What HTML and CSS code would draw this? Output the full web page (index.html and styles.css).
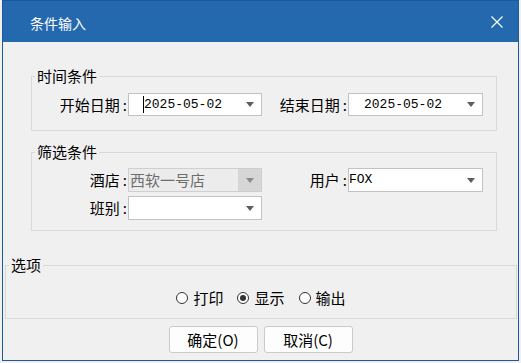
FILE: index.html
```html
<!DOCTYPE html>
<html lang="zh-CN">
  <head>
    <meta charset="UTF-8" />
    <meta name="viewport" content="width=device-width, initial-scale=1.0" />
    <title>条件输入</title>
    <link rel="stylesheet" href="styles.css">
  </head>
  <body>
    <div class="window">
      <div class="titlebar">
        <span class="title">条件输入</span>
        <svg class="close" width="12" height="12" viewBox="0 0 12 12">
          <path d="M0.5 0.5 L11.5 11.5 M11.5 0.5 L0.5 11.5" stroke="#fff" stroke-width="1.2" fill="none" />
        </svg>
      </div>

      <fieldset class="group group-time">
        <legend>时间条件</legend>
        <div class="grid">
          <label class="lbl">开始日期<span class="colon">:</span></label>
          <div class="combo">
            <span class="value date"><i class="caret"></i>2025-05-02</span>
            <span class="arrow"></span>
          </div>
          <label class="lbl">结束日期<span class="colon">:</span></label>
          <div class="combo">
            <span class="value date">2025-05-02</span>
            <span class="arrow"></span>
          </div>
        </div>
      </fieldset>

      <fieldset class="group group-filter">
        <legend>筛选条件</legend>
        <div class="grid">
          <label class="lbl">酒店<span class="colon">:</span></label>
          <div class="combo disabled">
            <span class="value">西软一号店</span>
            <span class="drop"><span class="arrow"></span></span>
          </div>
          <label class="lbl">用户<span class="colon">:</span></label>
          <div class="combo">
            <span class="value mono">FOX</span>
            <span class="arrow"></span>
          </div>
          <label class="lbl">班别<span class="colon">:</span></label>
          <div class="combo">
            <span class="value"></span>
            <span class="arrow"></span>
          </div>
        </div>
      </fieldset>

      <fieldset class="group group-opts">
        <legend>选项</legend>
        <div class="radios">
          <span class="radio"><span class="dot"></span>打印</span>
          <span class="radio checked"><span class="dot"></span>显示</span>
          <span class="radio"><span class="dot"></span>输出</span>
        </div>
      </fieldset>

      <div class="buttons">
        <button class="btn">确定(O)</button>
        <button class="btn">取消(C)</button>
      </div>
    </div>
  </body>
</html>
```

FILE: styles.css
```css
body {
  margin: 0;
  background-color: #f0f0f0;
  font-family: "Noto Sans CJK SC", "Noto Sans", sans-serif;
  font-size: 15px;
  color: #000;
}

.window {
  margin-left: 2px;
  width: 517px;
  height: 361px;
  box-sizing: border-box;
  border: 1px solid #1d5a9b;
  background-color: #f0f0f0;
}

.titlebar {
  height: 41px;
  background-color: #2469ae;
  display: flex;
  align-items: center;
  padding: 3px 15px 0 27px;
  box-sizing: border-box;
}

.title {
  color: #fff;
  font-size: 14px;
  line-height: 16px;
}

.close {
  margin-left: auto;
  margin-top: -2px;
}

.group {
  border: 1px solid #d9d9d9;
  padding: 0;
  min-width: 0;
}

.group legend {
  margin-left: 3px;
  padding: 0 2px;
  line-height: 16px;
  font-size: 15px;
}

.group-time {
  margin: 26px 21px 0 28px;
  padding: 9px 0 14px 0;
}

.group-filter {
  margin: 13px 21px 0 28px;
  padding: 8px 0 10px 0;
}

.group-opts {
  margin: 26px 1px 0 2px;
  padding: 17px 0 12px 0;
}

.grid {
  display: grid;
  grid-template-columns: 96px 134px 86px 135px;
  row-gap: 4px;
  align-items: center;
}

.lbl {
  text-align: right;
  line-height: 22px;
  white-space: nowrap;
}

.colon {
  padding: 0 1px 0 3px;
}

.combo {
  height: 24px;
  box-sizing: border-box;
  border: 1px solid #c2c2c2;
  background-color: #fff;
  display: flex;
  align-items: center;
}

.group-time .combo {
  height: 23px;
}

.value {
  flex: 1;
  white-space: nowrap;
  line-height: 20px;
}

.date {
  font-family: "Liberation Mono", monospace;
  font-size: 13px;
  padding-left: 15px;
  position: relative;
}

.mono {
  font-family: "Liberation Mono", monospace;
  font-size: 13px;
}

.caret {
  position: absolute;
  left: 14px;
  top: 1px;
  width: 1px;
  height: 17px;
  background-color: #000;
}

.arrow {
  width: 0;
  height: 0;
  border-left: 4.5px solid transparent;
  border-right: 4.5px solid transparent;
  border-top: 5px solid #5b5f5b;
  margin-right: 7px;
}

.combo.disabled {
  background-color: #ececec;
  border-color: #cfcfcf;
}

.combo.disabled .value {
  color: #6d6d6d;
  padding-left: 1px;
}

.drop {
  align-self: stretch;
  width: 23px;
  background-color: #d6d6d6;
  display: flex;
  align-items: center;
  justify-content: center;
}

.drop .arrow {
  margin-right: 0;
  border-top-color: #8a8a8a;
}

.radios {
  display: flex;
  justify-content: center;
  gap: 14px;
  line-height: 16px;
}

.radio {
  display: flex;
  align-items: center;
  gap: 5px;
}

.dot {
  width: 12px;
  height: 12px;
  box-sizing: border-box;
  border: 1px solid #333;
  border-radius: 50%;
  background-color: #fff;
  display: flex;
  align-items: center;
  justify-content: center;
}

.radio.checked .dot::after {
  content: "";
  width: 6px;
  height: 6px;
  border-radius: 50%;
  background-color: #333;
}

.buttons {
  display: flex;
  justify-content: center;
  gap: 6px;
  margin-top: 7px;
}

.btn {
  width: 89px;
  height: 27px;
  padding: 0;
  border: 1px solid #cacaca;
  border-radius: 3px;
  background-color: #fdfdfd;
  font-family: "Noto Sans CJK SC", "Noto Sans", sans-serif;
  font-size: 15px;
  color: #000;
}
```
